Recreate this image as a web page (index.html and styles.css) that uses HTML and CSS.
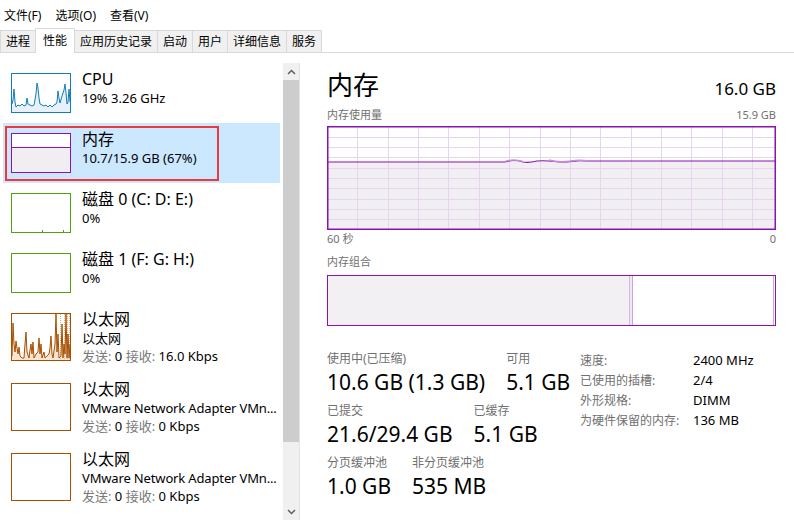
FILE: index.html
```html
<!DOCTYPE html>
<html lang="zh-CN">

<head>
    <meta charset="UTF-8">
    <title>任务管理器 - 性能</title>
    <link rel="stylesheet" href="styles.css">
</head>

<body>
    <!-- 菜单 -->
    <div class="menubar">
        <span>文件(F)</span>
        <span>选项(O)</span>
        <span>查看(V)</span>
    </div>
    <!-- 选项卡 -->
    <div class="tabbar">
        <div class="tab">进程</div>
        <div class="tab active">性能</div>
        <div class="tab">应用历史记录</div>
        <div class="tab">启动</div>
        <div class="tab">用户</div>
        <div class="tab">详细信息</div>
        <div class="tab">服务</div>
    </div>

    <div class="main">
        <!-- 左侧列表 -->
        <div class="sidebar">
            <div class="list">
                <div class="item">
                    <div class="thumb cpu">
                        <svg width="58" height="38" viewBox="0 0 58 38">
                            <polygon fill="#e8f1f9" points="0,38 0,30 1,26 2,15 3,28 4,33 6,31 8,32 10,30 12,32 14,31 15,24 16,30 18,31 20,32 22,31 24,20 25,9 26,14 27,24 28,30 30,31 32,32 34,31 36,33 38,31 40,33 42,31 44,30 45,28 46,17 47,24 48,29 50,22 52,16 53,10 54,19 55,30 56,28 57,15 58,28 58,38" />
                            <polyline fill="none" stroke="#117dbb" stroke-width="1" points="0,30 1,26 2,15 3,28 4,33 6,31 8,32 10,30 12,32 14,31 15,24 16,30 18,31 20,32 22,31 24,20 25,9 26,14 27,24 28,30 30,31 32,32 34,31 36,33 38,31 40,33 42,31 44,30 45,28 46,17 47,24 48,29 50,22 52,16 53,10 54,19 55,30 56,28 57,15 58,28" />
                        </svg>
                    </div>
                    <div class="info">
                        <div class="name">CPU</div>
                        <div class="sub">19% 3.26 GHz</div>
                    </div>
                </div>
                <div class="item selected">
                    <div class="thumb mem">
                        <div class="mem-fill"></div>
                    </div>
                    <div class="info">
                        <div class="name">内存</div>
                        <div class="sub">10.7/15.9 GB (67%)</div>
                    </div>
                    <div class="mark"></div>
                </div>
                <div class="item">
                    <div class="thumb disk"><i style="left: 30px"></i><i style="left: 51px"></i></div>
                    <div class="info">
                        <div class="name">磁盘 0 (C: D: E:)</div>
                        <div class="sub">0%</div>
                    </div>
                </div>
                <div class="item">
                    <div class="thumb disk"></div>
                    <div class="info">
                        <div class="name">磁盘 1 (F: G: H:)</div>
                        <div class="sub">0%</div>
                    </div>
                </div>
                <div class="item tall">
                    <div class="thumb eth">
                        <svg width="58" height="46" viewBox="0 0 58 46">
                            <polygon fill="#f6e4d4" points="0,46 0,42 1,9 2,30 3,38 4,27 5,34 6,40 7,33 8,42 10,44 12,44 13,30 14,18 15,38 17,44 18,36 19,30 20,40 21,28 22,44 24,40 26,38 27,24 28,40 29,30 30,44 32,38 33,44 35,42 37,40 38,34 39,22 40,40 41,44 43,30 44,0 45,38 46,20 47,44 49,42 50,10 51,44 52,30 53,40 54,0 55,44 56,20 57,44 58,30 58,46" />
                            <g stroke="#e9b48a" stroke-width="1" stroke-dasharray="1 1">
                                <line x1="48.5" y1="0" x2="48.5" y2="46" />
                                <line x1="52.5" y1="0" x2="52.5" y2="46" />
                                <line x1="55.5" y1="0" x2="55.5" y2="46" />
                                <line x1="57.5" y1="0" x2="57.5" y2="46" />
                            </g>
                            <polyline fill="none" stroke="#a74f01" stroke-width="1" points="0,42 1,9 2,30 3,38 4,27 5,34 6,40 7,33 8,42 10,44 12,44 13,30 14,18 15,38 17,44 18,36 19,30 20,40 21,28 22,44 24,40 26,38 27,24 28,40 29,30 30,44 32,38 33,44 35,42 37,40 38,34 39,22 40,40 41,44 43,30 44,0 45,38 46,20 47,44 49,42 50,10 51,44 52,30 53,40 54,0 55,44 56,20 57,44 58,30" />
                        </svg>
                    </div>
                    <div class="info">
                        <div class="name">以太网</div>
                        <div class="sub">以太网</div>
                        <div class="sub"><span class="gray">发送:</span> 0 <span class="gray">接收:</span> 16.0 Kbps</div>
                    </div>
                </div>
                <div class="item tall">
                    <div class="thumb eth"></div>
                    <div class="info">
                        <div class="name">以太网</div>
                        <div class="sub narrow">VMware Network Adapter VMn...</div>
                        <div class="sub"><span class="gray">发送:</span> 0 <span class="gray">接收:</span> 0 Kbps</div>
                    </div>
                </div>
                <div class="item tall">
                    <div class="thumb eth"></div>
                    <div class="info">
                        <div class="name">以太网</div>
                        <div class="sub narrow">VMware Network Adapter VMn...</div>
                        <div class="sub"><span class="gray">发送:</span> 0 <span class="gray">接收:</span> 0 Kbps</div>
                    </div>
                </div>
            </div>
            <!-- 滚动条 -->
            <div class="scrollbar">
                <div class="arrow">
                    <svg width="9" height="6" viewBox="0 0 9 6"><polyline points="1,5 4.5,1.5 8,5" fill="none" stroke="#606060" stroke-width="1.5" /></svg>
                </div>
                <div class="bar"></div>
                <div class="track"></div>
                <div class="arrow">
                    <svg width="9" height="6" viewBox="0 0 9 6"><polyline points="1,1 4.5,4.5 8,1" fill="none" stroke="#606060" stroke-width="1.5" /></svg>
                </div>
            </div>
        </div>

        <!-- 右侧详情 -->
        <div class="detail">
            <div class="head">
                <div class="title">内存</div>
                <div class="total">16.0 GB</div>
            </div>
            <div class="row-label">
                <span>内存使用量</span>
                <span>15.9 GB</span>
            </div>
            <div class="graph">
                <svg width="449" height="104" viewBox="0 0 449 104">
                    <path d="M0,36 L178,36 C184,34 190,34 196,36 C202,37 206,36 210,35 C222,34 228,36 236,36 C244,36 250,34 258,35 L449,35 L449,104 L0,104 Z" fill="#f2eff4" />
                    <g stroke="#e8d4ef" stroke-width="1">
                        <line x1="30.5" y1="0" x2="30.5" y2="104" />
                        <line x1="61.5" y1="0" x2="61.5" y2="104" />
                        <line x1="91.5" y1="0" x2="91.5" y2="104" />
                        <line x1="121.5" y1="0" x2="121.5" y2="104" />
                        <line x1="152.5" y1="0" x2="152.5" y2="104" />
                        <line x1="182.5" y1="0" x2="182.5" y2="104" />
                        <line x1="213.5" y1="0" x2="213.5" y2="104" />
                        <line x1="243.5" y1="0" x2="243.5" y2="104" />
                        <line x1="273.5" y1="0" x2="273.5" y2="104" />
                        <line x1="304.5" y1="0" x2="304.5" y2="104" />
                        <line x1="334.5" y1="0" x2="334.5" y2="104" />
                        <line x1="364.5" y1="0" x2="364.5" y2="104" />
                        <line x1="395.5" y1="0" x2="395.5" y2="104" />
                        <line x1="425.5" y1="0" x2="425.5" y2="104" />
                        <line x1="0" y1="11.5" x2="449" y2="11.5" />
                        <line x1="0" y1="21.5" x2="449" y2="21.5" />
                        <line x1="0" y1="31.5" x2="449" y2="31.5" />
                        <line x1="0" y1="42.5" x2="449" y2="42.5" />
                        <line x1="0" y1="52.5" x2="449" y2="52.5" />
                        <line x1="0" y1="62.5" x2="449" y2="62.5" />
                        <line x1="0" y1="73.5" x2="449" y2="73.5" />
                        <line x1="0" y1="83.5" x2="449" y2="83.5" />
                        <line x1="0" y1="93.5" x2="449" y2="93.5" />
                    </g>
                    <path d="M0,36 L178,36 C184,34 190,34 196,36 C202,37 206,36 210,35 C222,34 228,36 236,36 C244,36 250,34 258,35 L449,35" fill="none" stroke="#8b12ae" stroke-width="1.2" />
                    <path d="M178,35.5 C184,33.5 190,33.5 196,35.5 M222,34 C228,36 236,36 244,35 C250,34 254,34 262,35" fill="none" stroke="#c58fd8" stroke-width="1.5" />
                    <rect x="0.75" y="0.75" width="447.5" height="102.5" fill="none" stroke="#8b12ae" stroke-width="1.5" />
                </svg>
            </div>
            <div class="row-label axis">
                <span>60 秒</span>
                <span>0</span>
            </div>
            <div class="section-label">内存组合</div>
            <div class="compose">
                <div class="in-use"></div>
                <div class="modified"></div>
                <div class="free"></div>
            </div>

            <div class="stats">
                <div class="stats-left">
                    <div class="stat-row">
                        <div class="stat">
                            <div class="stat-label">使用中(已压缩)</div>
                            <div class="stat-value">10.6 GB (1.3 GB)</div>
                        </div>
                        <div class="stat">
                            <div class="stat-label">可用</div>
                            <div class="stat-value">5.1 GB</div>
                        </div>
                    </div>
                    <div class="stat-row">
                        <div class="stat">
                            <div class="stat-label">已提交</div>
                            <div class="stat-value">21.6/29.4 GB</div>
                        </div>
                        <div class="stat">
                            <div class="stat-label">已缓存</div>
                            <div class="stat-value">5.1 GB</div>
                        </div>
                    </div>
                    <div class="stat-row">
                        <div class="stat">
                            <div class="stat-label">分页缓冲池</div>
                            <div class="stat-value">1.0 GB</div>
                        </div>
                        <div class="stat">
                            <div class="stat-label">非分页缓冲池</div>
                            <div class="stat-value">535 MB</div>
                        </div>
                    </div>
                </div>
                <div class="stats-right">
                    <span class="k">速度:</span><span class="v">2400 MHz</span>
                    <span class="k">已使用的插槽:</span><span class="v">2/4</span>
                    <span class="k">外形规格:</span><span class="v">DIMM</span>
                    <span class="k">为硬件保留的内存:</span><span class="v">136 MB</span>
                </div>
            </div>
        </div>
    </div>
</body>

</html>
```

FILE: styles.css
```css
* {
    margin: 0;
    padding: 0;
    box-sizing: border-box;
}

body {
    width: 794px;
    height: 520px;
    overflow: hidden;
    background-color: #fff;
    color: #000;
    font-family: "Noto Sans", "Noto Sans CJK SC", sans-serif;
}

/* 菜单 */
.menubar {
    height: 28px;
    padding: 4px 0 0 4px;
    display: flex;
    font-size: 12px;
    line-height: 24px;
}

.menubar span {
    margin-right: 14px;
}

/* 选项卡 */
.tabbar {
    height: 25px;
    display: flex;
    align-items: flex-end;
    border-bottom: 1px solid #d9d9d9;
    font-size: 12px;
}

.tab {
    height: 22px;
    line-height: 21px;
    padding: 0 5px;
    background-color: #f0f0f0;
    border: 1px solid #d9d9d9;
    border-bottom: none;
    margin-left: -1px;
}

.tab:first-child {
    margin-left: 0;
}

.tab.active {
    height: 25px;
    line-height: 23px;
    margin-bottom: -1px;
    padding: 0 7px;
    background-color: #fff;
    position: relative;
}

/* 主体 */
.main {
    display: flex;
    height: 467px;
}

.sidebar {
    width: 300px;
    display: flex;
    padding-top: 10px;
}

.list {
    width: 283px;
    padding: 0 3px;
    overflow: hidden;
}

.item {
    height: 60px;
    display: flex;
    padding: 10px 0 0 8px;
    position: relative;
}

.item.tall {
    height: 70px;
}

.item.selected {
    background-color: #cce8ff;
}

.mark {
    position: absolute;
    left: 2px;
    top: 3px;
    width: 214px;
    height: 55px;
    border: 2.5px solid #ea3a3e;
}

.thumb {
    width: 60px;
    height: 40px;
    border: 1px solid;
    background-color: #fff;
    flex-shrink: 0;
    position: relative;
}

.thumb svg {
    display: block;
}

.thumb.cpu {
    border-color: #117dbb;
}

.thumb.mem {
    border-color: #8b12ae;
    display: flex;
    flex-direction: column;
    justify-content: flex-end;
}

.mem-fill {
    height: 25px;
    border-top: 1px solid #8b12ae;
    background-color: #f1eef3;
}

.thumb.disk {
    border-color: #4da60c;
}

.thumb.disk i {
    position: absolute;
    bottom: 0;
    width: 1px;
    height: 2px;
    background-color: #4da60c;
}

.thumb.eth {
    height: 48px;
    border-color: #a74f01;
}

.info {
    margin-left: 11px;
    min-width: 0;
    flex: 1;
}

.name {
    font-size: 16px;
    line-height: 20px;
    margin-top: -4px;
}

.sub {
    font-size: 13px;
    line-height: 18px;
    white-space: nowrap;
}

.sub.narrow {
    letter-spacing: -0.15px;
}

.gray {
    color: #7a7a7a;
}

/* 滚动条 */
.scrollbar {
    width: 17px;
    display: flex;
    flex-direction: column;
    background-color: #f0f0f0;
    border-right: 1px solid #e2e2e2;
}

.arrow {
    height: 17px;
    display: flex;
    align-items: center;
    justify-content: center;
}

.bar {
    height: 362px;
    background-color: #cdcdcd;
}

.track {
    flex: 1;
}

/* 右侧 */
.detail {
    flex: 1;
    padding: 15px 18px 0 27px;
}

.head {
    display: flex;
    justify-content: space-between;
    align-items: baseline;
    height: 34px;
}

.title {
    font-size: 26px;
    line-height: 34px;
}

.total {
    font-size: 17px;
    line-height: 34px;
}

.row-label {
    display: flex;
    justify-content: space-between;
    margin-top: 5px;
    font-size: 11px;
    line-height: 16px;
    color: #707070;
}

.graph {
    margin-top: 3px;
    height: 104px;
}

.graph svg {
    display: block;
}

.row-label.axis {
    margin-top: 1px;
}

.section-label {
    margin-top: 7px;
    font-size: 11px;
    line-height: 16px;
    color: #707070;
}

.compose {
    margin-top: 5px;
    height: 51px;
    display: flex;
    border: 1.5px solid #8b12ae;
}

.in-use {
    width: 301px;
    background-color: #f3f0f4;
}

.modified {
    width: 4px;
    border-left: 1px solid #d5b9e1;
    border-right: 1px solid #c9a5d8;
    background-color: #efe6f3;
}

.free {
    flex: 1;
    border-right: 1px solid #c9a5d8;
    margin-right: 1px;
}

/* 统计 */
.stats {
    margin-top: 24px;
    display: flex;
}

.stats-left {
    width: 253px;
}

.stat-row {
    display: flex;
    gap: 21px;
    margin-bottom: 6px;
}

.stat-label {
    font-size: 12px;
    line-height: 18px;
    color: #707070;
    white-space: nowrap;
}

.stat-value {
    font-size: 21px;
    line-height: 28px;
    white-space: nowrap;
}

.stats-right {
    display: grid;
    grid-template-columns: 113px auto;
    grid-auto-rows: 20px;
    align-items: center;
}

.stats-right .k {
    font-size: 12px;
    color: #707070;
}

.stats-right .v {
    font-size: 13px;
}
```
